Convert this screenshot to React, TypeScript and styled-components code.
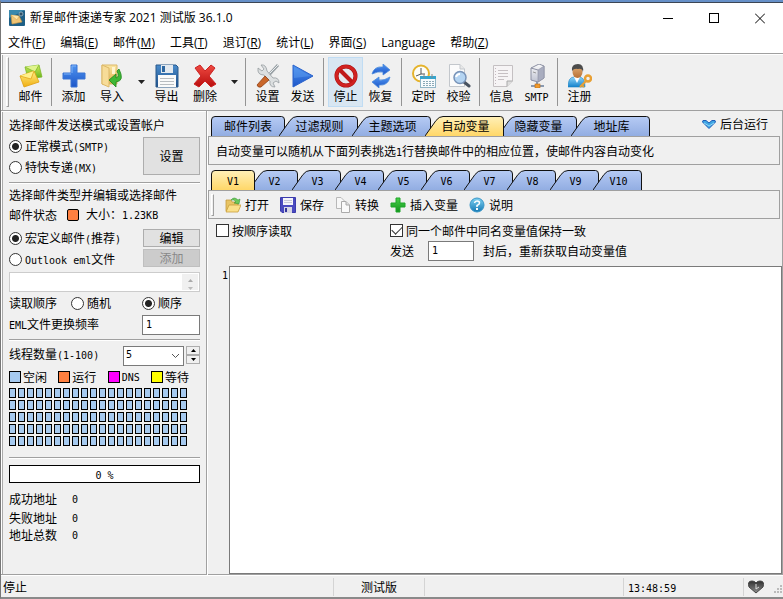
import React, { useState } from "react";
import styled, { createGlobalStyle, css } from "styled-components";

const face = "#f0f0f0";
const line = "#a0a0a0";

const GlobalStyle = createGlobalStyle`
  * { box-sizing: border-box; }
  body { margin: 0; background: ${face}; }
  body, button, input, select, textarea {
    font-family: "Noto Sans CJK SC", sans-serif;
    font-size: 12px;
    line-height: 16px;
    color: #000;
  }
  button, input, select, textarea { margin: 0; border-radius: 0; }
  svg { display: block; flex: none; }
`;

/* ---------- text ---------- */

const Narrow = styled.span`
  font-family: "DejaVu Sans Mono", monospace;
  font-size: 10px;
`;

const Label = styled.span`
  white-space: nowrap;
`;

function Mixed({ children }: { children: string }) {
  const parts = children.split(/([\x20-\x7e]+)/).filter(Boolean);
  return (
    <Label>
      {parts.map((p, i) => (/^[\x20-\x7e]/.test(p) ? <Narrow key={i}>{p}</Narrow> : p))}
    </Label>
  );
}

/* ---------- window frame ---------- */

const Window = styled.div`
  min-height: 100vh;
  display: flex;
  flex-direction: column;
  background: ${face};
  border-top: 2px solid #6690c8;
  border-left: 1px solid #777;
  border-bottom: 2px solid #8a8a8a;
`;

const TitleBar = styled.header`
  display: flex;
  align-items: center;
  height: 31px;
  padding-left: 8px;
  background: #fff;
  border-top: 1px solid #3c4654;
`;

const Title = styled.h1`
  flex: 1;
  margin: 0 0 0 5px;
  font-family: "Open Sans", "Noto Sans CJK SC", sans-serif;
  font-size: 12px;
  font-weight: 400;
  white-space: nowrap;
`;

const CaptionButton = styled.button`
  display: grid;
  place-items: center;
  width: 46px;
  height: 29px;
  padding: 0;
  border: 0;
  background: none;
`;

const MenuBar = styled.nav`
  display: flex;
  align-items: center;
  gap: 15px;
  height: 20px;
  padding-left: 7px;
  background: #fff;
`;

const MenuItem = styled.button`
  padding: 0;
  border: 0;
  background: none;
  font-family: "Open Sans", "Noto Sans CJK SC", sans-serif;
  white-space: nowrap;
`;

/* ---------- main toolbar ---------- */

const ToolBar = styled.div`
  display: flex;
  align-items: center;
  height: 58px;
  padding-left: 5px;
  border-top: 1px solid ${line};
  border-bottom: 1px solid ${line};
  box-shadow: inset 1px 1px #fff, inset 2px 0 #aaa;
`;

const Grip = styled.span<{ $h: number; $after?: number }>`
  width: 3px;
  height: ${(p) => p.$h}px;
  margin-right: ${(p) => p.$after ?? 0}px;
  border: 1px solid ${line};
  border-color: #fff ${line} ${line} #fff;
`;

const ToolButton = styled.button<{ $wide?: boolean; $pressed?: boolean }>`
  display: flex;
  flex-direction: column;
  align-items: center;
  width: ${(p) => (p.$wide ? 42 : 35)}px;
  height: 50px;
  padding: 6px 0 0;
  border: 1px solid ${(p) => (p.$pressed ? "#c0dcf3" : "transparent")};
  background: ${(p) => (p.$pressed ? "#d8e6f2" : "none")};
  line-height: 16px;
`;

const DropArrow = styled.button`
  display: grid;
  place-items: center;
  width: 16px;
  height: 50px;
  padding: 0;
  border: 0;
  background: none;
`;

const Separator = styled.span`
  width: 8px;
  height: 48px;
  padding-left: 3px;
  &::before {
    content: "";
    display: block;
    width: 1px;
    height: 100%;
    background: #949494;
  }
`;

/* ---------- body ---------- */

const Body = styled.div`
  flex: 1;
  display: flex;
  min-height: 0;
`;

const SidePanel = styled.aside`
  flex: none;
  width: 206px;
  padding: 4px 6px 0 8px;
  border: solid ${line};
  border-width: 0 1px 1px 0;
  box-shadow: inset 1px 1px #fff, inset 2px 0 #aaa, 1px 0 #fff;
`;

const Row = styled.div<{ $h?: number; $top?: number }>`
  display: flex;
  align-items: center;
  height: ${(p) => p.$h ?? 20}px;
  margin-top: ${(p) => p.$top ?? 0}px;
`;

const Divider = styled.hr<{ $top: number; $bottom: number }>`
  height: 2px;
  margin: ${(p) => p.$top}px 0 ${(p) => p.$bottom}px;
  border: 0;
  border-top: 1px solid ${line};
  background: #fff;
`;

const Split = styled.div<{ $top?: number }>`
  display: flex;
  justify-content: space-between;
  margin-top: ${(p) => p.$top ?? 0}px;
`;

const ButtonStack = styled.div`
  display: flex;
  flex-direction: column;
  gap: 2px;
  padding-top: 1px;
`;

const PushButton = styled.button<{ $h: number }>`
  width: 57px;
  height: ${(p) => p.$h}px;
  padding: 0;
  line-height: 14px;
  background: #e1e1e1;
  border: 1px solid #adadad;
  &:disabled {
    background: #ccc;
    border-color: #bfbfbf;
    color: #888;
  }
`;

const Choice = styled.label`
  display: flex;
  align-items: center;
  gap: 3px;
  height: 21px;
`;

const OrderCell = styled.div<{ $w: number }>`
  flex: 0 0 ${(p) => p.$w}px;
`;

const markLook = css`
  appearance: none;
  flex: none;
  width: 13px;
  height: 13px;
  border: 1px solid #333;
  background: #fff;
`;

const Radio = styled.input.attrs({ type: "radio" })`
  ${markLook}
  border-radius: 50%;
  &:checked {
    background: radial-gradient(circle, #222 0 3px, #fff 4px);
  }
`;

const Check = styled.input.attrs({ type: "checkbox" })`
  ${markLook}
  display: grid;
  place-items: center;
  &:checked::after {
    content: "";
    width: 9px;
    height: 5px;
    margin-bottom: 3px;
    border: solid #333;
    border-width: 0 0 1px 1px;
    transform: rotate(-45deg);
  }
`;

const Swatch = styled.span<{ $color: string }>`
  width: 12px;
  height: 12px;
  border: 1px solid #000;
  background: ${(p) => p.$color};
`;

const StateDot = styled(Swatch)`
  margin: 0 7px 0 10px;
  border-radius: 2px;
`;

const Legend = styled.div`
  display: flex;
  align-items: center;
  justify-content: space-between;
  height: 20px;
  margin-top: 2px;
  padding-right: 11px;
`;

const LegendItem = styled.span`
  display: flex;
  align-items: center;
  gap: 2px;
`;

const ThreadGrid = styled.div`
  display: grid;
  grid-template-columns: repeat(20, 7px);
  grid-auto-rows: 10px;
  gap: 2px;
  margin-top: 1px;
`;

const Thread = styled.span`
  border: 1px solid #000;
  background: #a6caf0;
`;

const TextBox = styled.input`
  height: 20px;
  padding: 0 3px 2px;
  border: 1px solid #7a7a7a;
  background: #fff;
  outline: 0;
  font-family: "DejaVu Sans Mono", monospace;
  font-size: 10px;
`;

const RateBox = styled(TextBox)`
  width: 58px;
  margin-left: auto;
`;

const FileBox = styled.div`
  display: flex;
  height: 20px;
  margin-top: 2px;
  border: 1px solid #ccc;
  background: #fff;
`;

const FileInput = styled.input`
  flex: 1;
  min-width: 0;
  padding: 0 3px;
  border: 0;
  background: none;
`;

const FileScroll = styled.button`
  display: grid;
  place-items: end center;
  width: 16px;
  margin: 1px;
  padding: 0;
  border: 0;
  background: ${face};
`;

const ComboWrap = styled.div`
  position: relative;
  width: 61px;
  height: 20px;
  margin-left: auto;
`;

const Combo = styled.select`
  appearance: none;
  width: 100%;
  height: 100%;
  padding: 0 2px 2px;
  border: 1px solid #7a7a7a;
  background: #fff;
  font-family: "DejaVu Sans Mono", monospace;
  font-size: 10px;
`;

const ComboArrow = styled.svg`
  position: absolute;
  right: 4px;
  top: 8px;
  pointer-events: none;
`;

const Spinner = styled.div`
  display: flex;
  flex-direction: column;
  margin-left: 2px;
`;

const SpinButton = styled.button`
  display: grid;
  place-items: center;
  width: 14px;
  height: 9px;
  padding: 0;
  background: ${face};
  border: 1px solid #adadad;
`;

const Progress = styled.div`
  display: grid;
  place-items: center;
  height: 18px;
  border: 1px solid #000;
  background: #fff;
`;

const Count = styled.output`
  margin-left: 15px;
`;

/* ---------- tabs ---------- */

const Content = styled.main`
  flex: 1;
  min-width: 0;
  display: flex;
  flex-direction: column;
  margin-left: 1px;
  border: solid ${line};
  border-width: 0 1px 1px 0;
`;

const TabLine = styled.div`
  display: flex;
  justify-content: space-between;
  margin-top: 5px;
  padding: 0 14px 0 3px;
`;

const Tabs = styled.div`
  display: flex;
  isolation: isolate;
`;

const TabButton = styled.button<{ $w: number; $first: boolean; $on: boolean }>`
  position: relative;
  z-index: ${(p) => (p.$on ? 1 : 0)};
  width: ${(p) => p.$w}px;
  height: 20px;
  margin-left: ${(p) => (p.$first ? 0 : -6)}px;
  padding: 0 0 0 ${(p) => (p.$first ? 0 : 2)}px;
  border: 0;
  background: none;
  line-height: 20px;
`;

const TabShape = styled.svg`
  position: absolute;
  inset: 0;
  z-index: -1;
`;

const BackgroundRun = styled.button`
  display: flex;
  align-items: center;
  gap: 4px;
  height: 16px;
  padding: 0;
  border: 0;
  background: none;
`;

type TabProps = { text: string; slot: number; first: boolean; on: boolean; onClick: () => void };

function Tab({ text, slot, first, on, onClick }: TabProps) {
  const w = first ? slot + 1 : slot + 6;
  const r = w - 0.5;
  const top = `H${r - 3}Q${r} .5 ${r} 4V20`;
  const d = first ? `M.5 20V4Q.5 .5 4 .5${top}` : `M0 20 L11 4.5Q14 .5 18 .5${top}`;
  return (
    <TabButton role="tab" aria-selected={on} $w={w} $first={first} $on={on} onClick={onClick}>
      <TabShape width={w} height={20} aria-hidden="true">
        <path d={d} fill={on ? "url(#tab-on)" : "url(#tab-off)"} stroke="#111" />
      </TabShape>
      <Mixed>{text}</Mixed>
    </TabButton>
  );
}

const Note = styled.p`
  height: 29px;
  margin: 0 2px 0 0;
  padding: 0 7px;
  border: 1px solid ${line};
  line-height: 27px;
  white-space: nowrap;
  overflow: hidden;
`;

const Page = styled.section`
  flex: 1;
  display: flex;
  flex-direction: column;
`;

const SmallBar = styled.div`
  display: flex;
  align-items: center;
  gap: 11px;
  height: 29px;
  margin-right: 2px;
  padding-left: 2px;
  border: 1px solid ${line};
`;

const SmallButton = styled.button`
  display: flex;
  align-items: center;
  gap: 4px;
  height: 24px;
  padding: 0;
  border: 0;
  background: none;
  white-space: nowrap;
`;

const Options = styled.div`
  display: grid;
  grid-template-columns: 174px 1fr;
  grid-template-rows: 21px 20px;
  align-items: center;
  padding: 1px 8px 0;
`;

const Repeat = styled.div`
  grid-column: 2;
  display: flex;
  align-items: center;
`;

const RepeatBox = styled(TextBox)`
  width: 46px;
  margin: 0 9px 0 14px;
`;

const Editor = styled.div`
  flex: 1;
  display: flex;
  margin-top: 5px;
`;

const LineNumbers = styled.div`
  width: 21px;
  padding-right: 1px;
  text-align: right;
`;

const EditArea = styled.textarea`
  flex: 1;
  padding: 1px 3px;
  border: 1px solid #7a7a7a;
  background: #fff;
  outline: 0;
  resize: none;
`;

/* ---------- status bar ---------- */

const StatusBar = styled.footer`
  display: flex;
  align-items: center;
  height: 22px;
  border-top: 1px solid #fff;
`;

const StatusCell = styled.div<{ $w?: number; $center?: boolean; $pad?: number }>`
  flex: ${(p) => (p.$w ? `0 0 ${p.$w}px` : "1")};
  height: 18px;
  padding-left: ${(p) => p.$pad ?? 0}px;
  text-align: ${(p) => (p.$center ? "center" : "left")};
  line-height: 18px;
  border-right: 1px solid #d4d4d4;
`;

const StatusEnd = styled.div`
  display: flex;
  align-items: flex-end;
  justify-content: space-between;
  width: 39px;
  padding-left: 4px;
`;

/* ---------- icons ---------- */

const Defs = styled.svg`
  position: absolute;
`;

const shades = [
  ["tab-off", "#b6cbf4", "#92ade2"],
  ["tab-on", "#fff0b8", "#ffd768"],
  ["g-blue", "#4f95f0", "#1c55c8"],
  ["g-yellow", "#fff08a", "#f0ae10"],
  ["g-green", "#d3ee5a", "#5fae18"],
  ["g-folder", "#fbe6a2", "#dfae48"],
  ["g-red", "#ef4a42", "#b90d0d"],
  ["g-navy", "#4a8ccc", "#1f4f88"],
  ["g-leaf", "#48d048", "#12941e"],
  ["g-help", "#7fd2f2", "#1478b4"],
  ["g-grey", "#fafafa", "#bfc3d2"],
  ["g-skin", "#e0ac74", "#b87034"],
  ["g-shirt", "#8fd4f8", "#1482cc"],
  ["g-heart", "#303030", "#8d8d8d"],
];

const Shades = () => (
  <Defs width="0" height="0" aria-hidden="true">
    <defs>
      {shades.map(([id, a, b]) => (
        <linearGradient key={id} id={id} x1="0" y1="0" x2="0" y2="1">
          <stop offset="0" stopColor={a} />
          <stop offset="1" stopColor={b} />
        </linearGradient>
      ))}
    </defs>
  </Defs>
);

const Ico = ({ size = 24, children }: { size?: number; children: React.ReactNode }) => (
  <svg width={size} height={size} viewBox={`0 0 ${size} ${size}`} fill="none" aria-hidden="true">
    {children}
  </svg>
);

const AppIcon = () => (
  <Ico size={16}>
    <rect width="16" height="16" rx="1" fill="#1e5f86" />
    <path d="M0 1Q0 0 1 0H16L0 8Z" fill="#3988ad" />
    <path d="M2 5L10 6L13 12L3 14Z" fill="#efc474" stroke="#cf9840" strokeWidth=".6" />
    <path d="M2 5L8 10L10 6" fill="#ffe4a6" stroke="#d8a858" strokeWidth=".6" />
    <circle cx="12" cy="4" r="2" fill="#2c5068" stroke="#9fb7c4" strokeWidth=".8" />
  </Ico>
);

const MailIcon = () => (
  <Ico>
    <path d="M6 3L20 1L23 13L9 15Z" fill="url(#g-green)" stroke="#7cb82c" strokeWidth=".8" />
    <path d="M6 3L16 8L20 1" fill="#e0f48c" stroke="#7cb82c" strokeWidth=".8" />
    <path d="M1 12L15 7L20 18L5 23Z" fill="url(#g-yellow)" stroke="#e0a010" strokeWidth=".8" />
    <path d="M1 12L12 15L15 7" fill="#fff08c" stroke="#e2a41a" strokeWidth=".8" />
  </Ico>
);

const PlusIcon = () => (
  <Ico>
    <path d="M9 1H15V9H23V15H15V23H9V15H1V9H9Z" fill="url(#g-blue)" stroke="#3b74d4" />
    <path d="M10 9V2H14M2 10H9" stroke="#7fb2f7" />
  </Ico>
);

const ImportIcon = () => (
  <Ico>
    <path d="M2 1H17V20H2Z" fill="url(#g-folder)" stroke="#dcb868" />
    <path d="M12 3H15V10H12Z" fill="#fff4d0" />
    <path d="M2 1L9 4V23L2 20Z" fill="#f7dc98" stroke="#dcb868" />
    <path d="M19 5Q25 17 16 18V23L9 16L16 10V14Q20 13 17 7Z" fill="#3fb836" stroke="#20851c" strokeWidth=".8" />
  </Ico>
);

const DiskIcon = () => (
  <Ico>
    <path d="M1 1H21L23 3V23H1Z" fill="url(#g-navy)" stroke="#2a5a8c" />
    <rect x="6" y="1" width="12" height="8" fill="#e3e9ef" />
    <rect x="7" y="2" width="3" height="6" fill="#2d66a0" />
    <rect x="3" y="11" width="18" height="12" fill="#fafafa" />
    <path d="M5 14.500H19M5 17.500H19M5 20.500H19" stroke="#b8bcc0" />
  </Ico>
);

const DeleteIcon = () => (
  <Ico>
    <path d="M2 4L7 1L12 7L18 1L22 4L16 12L23 20L18 23L12 17L6 23L1 20L8 12Z" fill="url(#g-red)" stroke="#c22" />
  </Ico>
);

const ToolsIcon = () => (
  <Ico>
    <path d="M22 1L12 12" stroke="#9aa2a6" strokeWidth="3" />
    <path d="M22 1L12 11" stroke="#e8ecee" />
    <path
      d="M2 4L6 7L8 5L5 1Q10 0 11 7L17 14Q23 13 23 19L20 17L17 19L19 23Q13 23 14 17L8 11Q1 11 2 4Z"
      fill="#dcdfe0"
      stroke="#959c9f"
      strokeWidth=".8"
    />
    <path d="M9 12L13 16L5 23Q2 24 1 21Z" fill="#c9662a" stroke="#8f3e12" strokeWidth=".8" />
  </Ico>
);

const SendIcon = () => (
  <Ico>
    <path d="M2 1L22 12L2 23Z" fill="url(#g-blue)" stroke="#2a62cc" />
    <path d="M3 3L20 12L3 14Z" fill="#5b9cf0" opacity=".5" />
  </Ico>
);

const StopIcon = () => (
  <Ico>
    <circle cx="12" cy="12" r="9.500" fill="#e4e8ee" stroke="#a80f0f" strokeWidth="4" />
    <circle cx="12" cy="12" r="9.500" stroke="#d02222" strokeWidth="3" />
    <path d="M6 6L18 18" stroke="#c01818" strokeWidth="4" />
  </Ico>
);

const RefreshIcon = () => (
  <Ico>
    <path d="M3 10Q5 2 14 3V0L21 6L14 11V8Q9 7 3 10Z" fill="url(#g-blue)" stroke="#4a8adc" strokeWidth=".8" />
    <path d="M21 13Q19 22 10 21V24L3 18L10 13V16Q15 17 21 13Z" fill="url(#g-blue)" stroke="#4a8adc" strokeWidth=".8" />
  </Ico>
);

const ClockIcon = () => (
  <Ico>
    <circle cx="9" cy="9.500" r="8" fill="#fdfdf7" stroke="#e5b32c" strokeWidth="2" />
    <path d="M9 4V10L4 12M9 10H13" stroke="#555" />
    <rect x="8.500" y="12.500" width="15" height="11" fill="#f7fbfd" stroke="#91b5c6" />
    <path d="M8 12H24V15H8Z" fill="#35a5cd" />
    <path d="M11 17.500H22M11 19.500H22M11 21.500H22" stroke="#8ba9b7" strokeDasharray="2 1" />
    <path d="M12 10V14M20 10V14" stroke="#888" />
  </Ico>
);

const VerifyIcon = () => (
  <Ico>
    <path d="M2.500 .5H13L17.500 5V22.500H2.500Z" fill="#fbfbfb" stroke="#c3c7cc" />
    <path d="M13 .5V5H17.500" fill="#e8e8e8" stroke="#c3c7cc" />
    <path d="M17 18L22 22" stroke="#485260" strokeWidth="3" strokeLinecap="round" />
    <circle cx="13" cy="13.500" r="6" fill="#b4d4f2" stroke="#7893b8" strokeWidth="1.500" />
    <path d="M9 13Q10 10 13 10" stroke="#fff" strokeWidth="2" />
  </Ico>
);

const InfoIcon = () => (
  <Ico>
    <path d="M3.500 1.500H22.500V17L17 22.500H3.500Z" fill="#f6f4f5" stroke="#c4c0c2" />
    <path d="M8 6.500H18M8 9.500H18M8 12.500H18M8 15.500H14" stroke="#c6c0c3" />
    <path d="M5.500 4V21" stroke="#c4b8be" strokeDasharray="1 2" />
    <path d="M17 22.500V17H22.500" fill="#ddd" stroke="#aaa" />
  </Ico>
);

const ServerIcon = () => (
  <Ico>
    <path d="M6 4L14 0L19 2V14L13 18L6 16Z" fill="url(#g-grey)" stroke="#8b8fa2" />
    <path d="M13 6L19 2V14L13 18Z" fill="#a9adbf" stroke="#8b8fa2" strokeWidth=".6" />
    <path d="M6 4L13 6" stroke="#8b8fa2" />
    <path d="M8 8L11 9" stroke="#999" />
    <path d="M12 18V21M6 22H19" stroke="#8a9ab0" strokeWidth="2" />
    <rect x="10" y="20" width="5" height="4" fill="#f09a2c" stroke="#b86912" strokeWidth=".6" />
  </Ico>
);

const UserIcon = () => (
  <Ico>
    <path d="M0 23Q0 13 6 13H12Q17 14 17 23Z" fill="url(#g-shirt)" stroke="#1c84c4" strokeWidth=".6" />
    <path d="M6 13L9 19L12 13Z" fill="#fff" />
    <ellipse cx="9.500" cy="8" rx="5" ry="6" fill="url(#g-skin)" />
    <path d="M4 7Q3 0 10 0Q16 0 15 8Q14 4 10 5Q6 4 4 7Z" fill="#4c4c4c" />
    <circle cx="20" cy="14.500" r="3" stroke="#e8a034" strokeWidth="2.500" />
    <path d="M18 17L12 23M14 21L16 23" stroke="#e8a034" strokeWidth="2" />
  </Ico>
);

const OpenIcon = () => (
  <Ico size={16}>
    <path d="M1 3H6L7 5H13V14H1Z" fill="#e8c464" stroke="#c49a3c" strokeWidth=".8" />
    <path d="M4 8H16L13 15H1Z" fill="#fbe08a" stroke="#c9a03c" strokeWidth=".8" />
    <path d="M6 3Q9 -1 13 3L15 2L14 7L9 6L11 5Q9 2 6 3Z" fill="#6cca5c" stroke="#2b8a28" strokeWidth=".5" />
  </Ico>
);

const SaveIcon = () => (
  <Ico size={16}>
    <path d="M.5 .5H15.500V15.500H2L.5 14Z" fill="#4a4ac0" stroke="#3c3cac" />
    <rect x="3" y="1" width="10" height="7" fill="#f4f4fa" />
    <path d="M4 3.500H12M4 5.500H12" stroke="#c8c8d8" />
    <rect x="4" y="10" width="8" height="6" fill="#d6d6e4" />
    <rect x="5" y="11" width="2" height="4" fill="#34349c" />
  </Ico>
);

const CopyIcon = () => (
  <Ico size={16}>
    <path d="M1.500 .5H6L9.500 4V11.500H1.500Z" fill="#f7f7f7" stroke="#b8b8b8" />
    <path d="M6.500 4.500H11L14.500 8V15.500H6.500Z" fill="#fafafa" stroke="#aaa" />
    <path d="M11 4.500V8H14.500" fill="#ddd" stroke="#aaa" />
  </Ico>
);

const GreenPlusIcon = () => (
  <Ico size={16}>
    <path d="M6 1H10V6H15V10H10V15H6V10H1V6H6Z" fill="url(#g-leaf)" stroke="#1ea62a" />
  </Ico>
);

const HelpIcon = () => (
  <Ico size={16}>
    <circle cx="8" cy="8" r="7" fill="url(#g-help)" stroke="#3a96c8" />
    <path d="M5.500 6Q6 4 8 4Q10.500 4 10.500 6Q10.500 7.500 8 8.500V10" stroke="#fff" strokeWidth="1.500" />
    <rect x="7" y="11" width="2" height="2" fill="#fff" />
  </Ico>
);

const DropGlyph = () => (
  <svg width="7" height="4" aria-hidden="true">
    <path d="M0 0H7L3.500 4Z" fill="#222" />
  </svg>
);

const Triangle = ({ color = "#000", flip = false }: { color?: string; flip?: boolean }) => (
  <svg width="5" height="3" aria-hidden="true">
    <path d={flip ? "M0 0H5L2.500 3Z" : "M0 3H5L2.500 0Z"} fill={color} />
  </svg>
);

/* ---------- application ---------- */

const menus = ["文件(F)", "编辑(E)", "邮件(M)", "工具(T)", "退订(R)", "统计(L)", "界面(S)", "Language", "帮助(Z)"];

type Tool = { text: string; icon: React.ReactNode; drop?: boolean; pressed?: boolean };

const toolGroups: Tool[][] = [
  [{ text: "邮件", icon: <MailIcon /> }],
  [
    { text: "添加", icon: <PlusIcon /> },
    { text: "导入", icon: <ImportIcon />, drop: true },
    { text: "导出", icon: <DiskIcon /> },
    { text: "删除", icon: <DeleteIcon />, drop: true },
  ],
  [{ text: "设置", icon: <ToolsIcon /> }, { text: "发送", icon: <SendIcon /> }],
  [{ text: "停止", icon: <StopIcon />, pressed: true }, { text: "恢复", icon: <RefreshIcon /> }],
  [{ text: "定时", icon: <ClockIcon /> }, { text: "校验", icon: <VerifyIcon /> }],
  [{ text: "信息", icon: <InfoIcon /> }, { text: "SMTP", icon: <ServerIcon /> }],
  [{ text: "注册", icon: <UserIcon /> }],
];

const legend = [
  ["空闲", "#a6caf0"],
  ["运行", "#ff8040"],
  ["DNS", "#ff00ff"],
  ["等待", "#ffff00"],
];

const pages = ["邮件列表", "过滤规则", "主题选项", "自动变量", "隐藏变量", "地址库"];
const variables = Array.from({ length: 10 }, (_, i) => `V${i + 1}`);

const fileTools: Tool[] = [
  { text: "打开", icon: <OpenIcon /> },
  { text: "保存", icon: <SaveIcon /> },
  { text: "转换", icon: <CopyIcon /> },
  { text: "插入变量", icon: <GreenPlusIcon /> },
  { text: "说明", icon: <HelpIcon /> },
];

function MenuText({ text }: { text: string }) {
  const m = text.match(/^(.*\()(.)\)$/);
  if (!m) return <>{text}</>;
  return (
    <>
      {m[1]}
      <u>{m[2]}</u>)
    </>
  );
}

function SideBar() {
  return (
    <SidePanel>
      <Row><Mixed>选择邮件发送模式或设置帐户</Mixed></Row>
      <Split $top={1}>
        <div>
          <Choice><Radio name="mode" defaultChecked /><Mixed>正常模式(SMTP)</Mixed></Choice>
          <Choice><Radio name="mode" /><Mixed>特快专递(MX)</Mixed></Choice>
        </div>
        <ButtonStack><PushButton $h={38}>设置</PushButton></ButtonStack>
      </Split>
      <Divider $top={4} $bottom={1} />
      <Row><Mixed>选择邮件类型并编辑或选择邮件</Mixed></Row>
      <Row>
        <Mixed>邮件状态</Mixed>
        <StateDot $color="#ff8040" />
        <Mixed>大小：1.23KB</Mixed>
      </Row>
      <Split $top={3}>
        <div>
          <Choice><Radio name="kind" defaultChecked /><Mixed>宏定义邮件(推荐)</Mixed></Choice>
          <Choice><Radio name="kind" /><Mixed>Outlook eml文件</Mixed></Choice>
        </div>
        <ButtonStack>
          <PushButton $h={18}>编辑</PushButton>
          <PushButton $h={18} disabled>添加</PushButton>
        </ButtonStack>
      </Split>
      <FileBox>
        <FileInput aria-label="eml文件" disabled />
        <FileScroll disabled aria-label="滚动">
          <Triangle color="#aaa" />
          <Triangle color="#bbb" flip />
        </FileScroll>
      </FileBox>
      <Row $top={1}>
        <OrderCell $w={62}><Mixed>读取顺序</Mixed></OrderCell>
        <OrderCell $w={71}>
          <Choice><Radio name="order" /><Mixed>随机</Mixed></Choice>
        </OrderCell>
        <Choice><Radio name="order" defaultChecked /><Mixed>顺序</Mixed></Choice>
      </Row>
      <Row $top={2}>
        <label htmlFor="rate"><Mixed>EML文件更换频率</Mixed></label>
        <RateBox id="rate" defaultValue="1" />
      </Row>
      <Divider $top={4} $bottom={4} />
      <Row>
        <label htmlFor="threads"><Mixed>线程数量(1-100)</Mixed></label>
        <ComboWrap>
          <Combo id="threads" defaultValue="5">
            <option>1</option>
            <option>5</option>
            <option>10</option>
            <option>100</option>
          </Combo>
          <ComboArrow width="9" height="6" aria-hidden="true">
            <path d="M1 1L4.500 4.500L8 1" fill="none" stroke="#555" />
          </ComboArrow>
        </ComboWrap>
        <Spinner>
          <SpinButton aria-label="增加"><Triangle /></SpinButton>
          <SpinButton aria-label="减少"><Triangle flip /></SpinButton>
        </Spinner>
      </Row>
      <Legend>
        {legend.map(([name, color]) => (
          <LegendItem key={name}><Swatch $color={color} /><Mixed>{name}</Mixed></LegendItem>
        ))}
      </Legend>
      <ThreadGrid>
        {Array.from({ length: 100 }, (_, i) => <Thread key={i} />)}
      </ThreadGrid>
      <Divider $top={11} $bottom={6} />
      <Progress role="progressbar" aria-valuenow={0}><Mixed>0 %</Mixed></Progress>
      <Row $top={6}><Mixed>成功地址</Mixed><Count><Mixed>0</Mixed></Count></Row>
      <Row $h={18}><Mixed>失败地址</Mixed><Count><Mixed>0</Mixed></Count></Row>
      <Row $h={16}><Mixed>地址总数</Mixed><Count><Mixed>0</Mixed></Count></Row>
    </SidePanel>
  );
}

export default function App() {
  const [page, setPage] = useState("自动变量");
  const [variable, setVariable] = useState("V1");

  return (
    <Window>
      <GlobalStyle />
      <Shades />
      <TitleBar>
        <AppIcon />
        <Title>新星邮件速递专家 2021 测试版 36.1.0</Title>
        <CaptionButton aria-label="最小化">
          <svg width="10" height="11"><path d="M0 5.500H10" stroke="#000" /></svg>
        </CaptionButton>
        <CaptionButton aria-label="最大化">
          <svg width="10" height="11"><rect x=".5" y=".5" width="9" height="9" fill="none" stroke="#000" /></svg>
        </CaptionButton>
        <CaptionButton aria-label="关闭">
          <svg width="10" height="11"><path d="M0 .5L10 10.500M10 .5L0 10.500" stroke="#000" /></svg>
        </CaptionButton>
      </TitleBar>
      <MenuBar>
        {menus.map((m) => (
          <MenuItem key={m}><MenuText text={m} /></MenuItem>
        ))}
      </MenuBar>
      <ToolBar role="toolbar">
        <Grip $h={50} $after={4} />
        {toolGroups.map((group, g) => (
          <React.Fragment key={g}>
            {g > 0 && <Separator />}
            {group.map((t) => (
              <React.Fragment key={t.text}>
                <ToolButton $wide={t.drop} $pressed={t.pressed}>
                  {t.icon}
                  <Mixed>{t.text}</Mixed>
                </ToolButton>
                {t.drop && <DropArrow aria-label={`${t.text}选项`}><DropGlyph /></DropArrow>}
              </React.Fragment>
            ))}
          </React.Fragment>
        ))}
      </ToolBar>
      <Body>
        <SideBar />
        <Content>
          <TabLine>
            <Tabs role="tablist">
              {pages.map((p, i) => (
                <Tab key={p} text={p} slot={73} first={i === 0} on={p === page} onClick={() => setPage(p)} />
              ))}
            </Tabs>
            <BackgroundRun>
              <svg width="14" height="9" aria-hidden="true">
                <path d="M1 .5H4L7 3L10 .5H13L13.500 2L7 8.500L.5 2Z" fill="#3fa6e4" stroke="#1c5cb8" />
                <path d="M2 3L7 6L12 3" fill="none" stroke="#8fd6f6" />
              </svg>
              <Label>后台运行</Label>
            </BackgroundRun>
          </TabLine>
          <Note><Mixed>自动变量可以随机从下面列表挑选1行替换邮件中的相应位置，使邮件内容自动变化</Mixed></Note>
          <TabLine>
            <Tabs role="tablist">
              {variables.map((v, i) => (
                <Tab key={v} text={v} slot={43} first={i === 0} on={v === variable} onClick={() => setVariable(v)} />
              ))}
            </Tabs>
          </TabLine>
          <Page>
            <SmallBar role="toolbar">
              <Grip $h={22} />
              {fileTools.map((t) => (
                <SmallButton key={t.text}>{t.icon}{t.text}</SmallButton>
              ))}
            </SmallBar>
            <Options>
              <Choice><Check /><Mixed>按顺序读取</Mixed></Choice>
              <Choice><Check defaultChecked /><Mixed>同一个邮件中同名变量值保持一致</Mixed></Choice>
              <Repeat>
                <label htmlFor="repeat">发送</label>
                <RepeatBox id="repeat" defaultValue="1" />
                <Label>封后，重新获取自动变量值</Label>
              </Repeat>
            </Options>
            <Editor>
              <LineNumbers><Mixed>1</Mixed></LineNumbers>
              <EditArea aria-label="变量内容" spellCheck={false} />
            </Editor>
          </Page>
        </Content>
      </Body>
      <StatusBar>
        <StatusCell $w={333} $pad={2}>停止</StatusCell>
        <StatusCell $w={91} $center>测试版</StatusCell>
        <StatusCell />
        <StatusCell $w={120} $pad={4}><Mixed>13:48:59</Mixed></StatusCell>
        <StatusEnd>
          <svg width="16" height="14" aria-hidden="true">
            <path d="M8 13L1 7Q-1 1 4 1Q7 1 8 3Q9 1 12 1Q17 1 15 7Z" fill="url(#g-heart)" stroke="#444" />
            <path d="M8 4V9L11 7" fill="none" stroke="#ddd" />
          </svg>
          <svg width="9" height="9" aria-hidden="true">
            <path d="M6 0H8V2H6ZM3 3H5V5H3ZM6 3H8V5H6ZM0 6H2V8H0ZM3 6H5V8H3ZM6 6H8V8H6Z" fill="#bbb" />
          </svg>
        </StatusEnd>
      </StatusBar>
    </Window>
  );
}
